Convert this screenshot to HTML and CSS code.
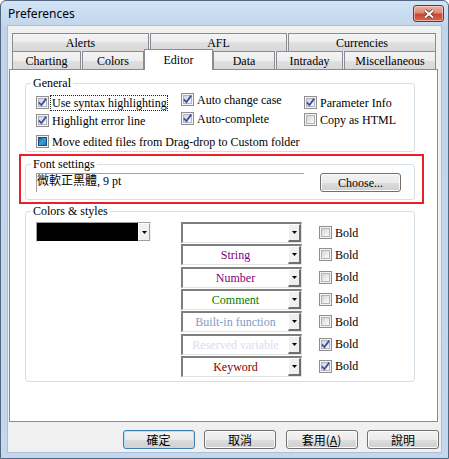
FILE: index.html
```html
<!DOCTYPE html>
<html>
<head>
<meta charset="utf-8">
<link rel="stylesheet" href="styles.css">
</head>
<body>
<div class="window">
  <div class="titlebar">
    <span class="title">Preferences</span>
    <div class="close">
      <svg width="12" height="10" viewBox="0 0 12 10"><path d="M2 1.5 L10 8.5 M10 1.5 L2 8.5" stroke="#5b2a22" stroke-width="3.6" fill="none"/><path d="M2 1.5 L10 8.5 M10 1.5 L2 8.5" stroke="#ffffff" stroke-width="2" fill="none"/></svg>
    </div>
  </div>
  <div class="client">
    <div class="tabs">
      <div class="tab-row top">
        <div class="tab t-alerts">Alerts</div>
        <div class="tab t-afl">AFL</div>
        <div class="tab t-cur">Currencies</div>
      </div>
      <div class="tab-row bottom">
        <div class="tab t-chart">Charting</div>
        <div class="tab t-colors">Colors</div>
        <div class="tab t-editor selected">Editor</div>
        <div class="tab t-data">Data</div>
        <div class="tab t-intra">Intraday</div>
        <div class="tab t-misc">Miscellaneous</div>
      </div>
    </div>
    <div class="panel">
      <fieldset class="group">
        <legend>General</legend>
        <div class="gen-body">
          <div class="gen-grid">
            <div class="gcol c1">
              <div class="chk"><span class="cb"><svg class="tick" width="9" height="9" viewBox="0 0 9 9"><path d="M0.8 4.3 L3.4 7 L8.2 0.6" stroke="#3f4fa6" stroke-width="1.8" fill="none"/></svg></span><span class="focus">Use syntax highlighting</span></div>
              <div class="chk"><span class="cb"><svg class="tick" width="9" height="9" viewBox="0 0 9 9"><path d="M0.8 4.3 L3.4 7 L8.2 0.6" stroke="#3f4fa6" stroke-width="1.8" fill="none"/></svg></span><span>Highlight error line</span></div>
            </div>
            <div class="gcol c2">
              <div class="chk"><span class="cb"><svg class="tick" width="9" height="9" viewBox="0 0 9 9"><path d="M0.8 4.3 L3.4 7 L8.2 0.6" stroke="#3f4fa6" stroke-width="1.8" fill="none"/></svg></span><span>Auto change case</span></div>
              <div class="chk"><span class="cb"><svg class="tick" width="9" height="9" viewBox="0 0 9 9"><path d="M0.8 4.3 L3.4 7 L8.2 0.6" stroke="#3f4fa6" stroke-width="1.8" fill="none"/></svg></span><span>Auto-complete</span></div>
            </div>
            <div class="gcol c3">
              <div class="chk"><span class="cb"><svg class="tick" width="9" height="9" viewBox="0 0 9 9"><path d="M0.8 4.3 L3.4 7 L8.2 0.6" stroke="#3f4fa6" stroke-width="1.8" fill="none"/></svg></span><span>Parameter Info</span></div>
              <div class="chk"><span class="cb"></span><span>Copy as HTML</span></div>
            </div>
          </div>
          <div class="chk row3"><span class="cb mixed"></span><span>Move edited files from Drag-drop to Custom folder</span></div>
        </div>
      </fieldset>

      <div class="highlight">
        <fieldset class="group">
          <legend>Font settings</legend>
          <div class="font-row">
            <div class="font-field">微軟正黑體, 9 pt</div>
            <div class="btn choose">Choose...</div>
          </div>
        </fieldset>
      </div>

      <fieldset class="group">
        <legend>Colors &amp; styles</legend>
        <div class="colors-body">
          <div class="combo black"><span class="combo-val"></span><span class="arrow"><svg width="5" height="3" viewBox="0 0 5 3"><polygon points="0,0 5,0 2.5,3" fill="#000"/></svg></span></div>
          <div class="style-list">
            <div class="style-row">
              <div class="combo"><span class="combo-val"></span><span class="arrow"><svg width="5" height="3" viewBox="0 0 5 3"><polygon points="0,0 5,0 2.5,3" fill="#000"/></svg></span></div>
              <div class="chk bold"><span class="cb"></span><span>Bold</span></div>
            </div>
            <div class="style-row">
              <div class="combo"><span class="combo-val c-string">String</span><span class="arrow"><svg width="5" height="3" viewBox="0 0 5 3"><polygon points="0,0 5,0 2.5,3" fill="#000"/></svg></span></div>
              <div class="chk bold"><span class="cb"></span><span>Bold</span></div>
            </div>
            <div class="style-row">
              <div class="combo"><span class="combo-val c-number">Number</span><span class="arrow"><svg width="5" height="3" viewBox="0 0 5 3"><polygon points="0,0 5,0 2.5,3" fill="#000"/></svg></span></div>
              <div class="chk bold"><span class="cb"></span><span>Bold</span></div>
            </div>
            <div class="style-row">
              <div class="combo"><span class="combo-val c-comment">Comment</span><span class="arrow"><svg width="5" height="3" viewBox="0 0 5 3"><polygon points="0,0 5,0 2.5,3" fill="#000"/></svg></span></div>
              <div class="chk bold"><span class="cb"></span><span>Bold</span></div>
            </div>
            <div class="style-row">
              <div class="combo"><span class="combo-val c-builtin">Built-in function</span><span class="arrow"><svg width="5" height="3" viewBox="0 0 5 3"><polygon points="0,0 5,0 2.5,3" fill="#000"/></svg></span></div>
              <div class="chk bold"><span class="cb"></span><span>Bold</span></div>
            </div>
            <div class="style-row">
              <div class="combo"><span class="combo-val c-reserved">Reserved variable</span><span class="arrow"><svg width="5" height="3" viewBox="0 0 5 3"><polygon points="0,0 5,0 2.5,3" fill="#000"/></svg></span></div>
              <div class="chk bold"><span class="cb"><svg class="tick" width="9" height="9" viewBox="0 0 9 9"><path d="M0.8 4.3 L3.4 7 L8.2 0.6" stroke="#3f4fa6" stroke-width="1.8" fill="none"/></svg></span><span>Bold</span></div>
            </div>
            <div class="style-row">
              <div class="combo"><span class="combo-val c-keyword">Keyword</span><span class="arrow"><svg width="5" height="3" viewBox="0 0 5 3"><polygon points="0,0 5,0 2.5,3" fill="#000"/></svg></span></div>
              <div class="chk bold"><span class="cb"><svg class="tick" width="9" height="9" viewBox="0 0 9 9"><path d="M0.8 4.3 L3.4 7 L8.2 0.6" stroke="#3f4fa6" stroke-width="1.8" fill="none"/></svg></span><span>Bold</span></div>
            </div>
          </div>
        </div>
      </fieldset>
    </div>
    <div class="buttons">
      <div class="btn cjk default">確定</div>
      <div class="btn cjk">取消</div>
      <div class="btn cjk">套用(<u>A</u>)</div>
      <div class="btn cjk">說明</div>
    </div>
  </div>
</div>
</body>
</html>
```

FILE: styles.css
```css
html, body {
  margin: 0;
  padding: 0;
  background: #ffffff;
}

.window {
  box-sizing: border-box;
  width: 449px;
  height: 459px;
  border: 1px solid #51667f;
  border-radius: 6px 6px 0 0;
  background: linear-gradient(#d3e3f5 0px, #c0d5ec 26px, #c4d7ed 100%);
  display: flex;
  flex-direction: column;
  font-family: "Liberation Serif", "Noto Sans CJK TC", serif;
  font-size: 12px;
  color: #000;
}

.titlebar {
  height: 25px;
  display: flex;
  justify-content: space-between;
  align-items: flex-start;
  padding: 4px 4px 0 7px;
  box-sizing: border-box;
  flex: none;
}

.title {
  font-family: "Noto Sans", "Open Sans", sans-serif;
  font-size: 12px;
  line-height: 18px;
  margin-top: 0;
  color: #000;
}

.close {
  box-sizing: border-box;
  width: 31px;
  height: 17px;
  border: 1px solid #7a3226;
  border-radius: 3px;
  background: linear-gradient(#eab1a5 0%, #dc8a78 45%, #c8472f 55%, #d66a4f 100%);
  box-shadow: inset 0 0 0 1px rgba(255, 220, 210, 0.6);
  display: flex;
  align-items: center;
  justify-content: center;
}

.client {
  flex: 1;
  margin: 0 7px 6px 7px;
  background: #f0f0f0;
  padding: 7px 2px 0 1px;
  display: flex;
  flex-direction: column;
  box-shadow: 0 0 0 1px #aabfd8;
}

/* Tabs */
.tabs {
  margin-left: 3px;
  display: flex;
  flex-direction: column;
}

.tab-row {
  display: flex;
  height: 18px;
}

.tab {
  box-sizing: border-box;
  height: 18px;
  border: 1px solid #898c95;
  border-bottom: none;
  background: linear-gradient(#f4f4f4 0%, #ededed 50%, #e0e0e0 50%, #d8d8d8 100%);
  display: flex;
  align-items: center;
  justify-content: center;
  line-height: 14px;
  padding-top: 1px;
}

.tab-row.top .tab {
  border-bottom: none;
}

.t-alerts { width: 137px; margin-right: 1px; }
.t-afl { width: 137px; margin-right: 1px; }
.t-cur { width: 148px; }
.t-chart { width: 69px; margin-right: 1px; }
.t-colors { width: 62px; }
.t-editor { width: 69px; }
.t-data { width: 62px; margin-right: 1px; }
.t-intra { width: 67px; margin-right: 1px; }
.t-misc { width: 92px; }

.tab.selected {
  background: #ffffff;
  height: 21px;
  margin-top: -2px;
  position: relative;
  z-index: 1;
  align-items: flex-start;
  padding-top: 3px;
}

/* Panel */
.panel {
  box-sizing: border-box;
  width: 429px;
  height: 353px;
  border: 1px solid #898c95;
  background: #ffffff;
  padding: 6px 22px 0 15px;
  flex: none;
}

.group {
  margin: 0;
  padding: 0;
  border: 1px solid #d5dfe5;
  border-radius: 3px;
  min-width: 0;
}

.group legend {
  margin-left: 5px;
  padding: 0 2px;
  line-height: 14px;
  font-size: 12px;
}

.gen-body {
  padding: 0 0 1px 10px;
}

.gen-grid {
  display: grid;
  grid-template-columns: 145px 123px 1fr;
}

.gcol {
  display: flex;
  flex-direction: column;
}

.gcol.c1 { padding-top: 4px; gap: 1px; }
.gcol.c2 { padding-top: 1px; gap: 2px; }
.gcol.c3 { padding-top: 4px; gap: 0; }

.chk {
  display: flex;
  align-items: center;
  height: 17px;
  gap: 3px;
  white-space: nowrap;
  line-height: 14px;
}

.chk.row3 {
  margin-top: 4px;
}

.focus {
  outline: 1px dotted #222;
  outline-offset: 0;
  margin-left: -1px;
  padding-left: 1px;
}

.cb {
  box-sizing: border-box;
  width: 13px;
  height: 13px;
  flex: none;
  border: 1px solid #8f8f8f;
  background: #f4f4f4;
  padding: 1px;
  display: grid;
}

.cb::before {
  content: "";
  grid-area: 1 / 1;
  border: 1px solid #b1b5ba;
  background: linear-gradient(135deg, #cfd2d7 0%, #e9ebee 55%, #fbfbfb 100%);
}

.cb .tick {
  grid-area: 1 / 1;
  overflow: visible;
}

.cb.mixed::before {
  border-color: #1d4f80;
  background: linear-gradient(135deg, #1f5f98 0%, #3aa0d6 50%, #2275b3 100%);
}

/* Font settings highlight */
.highlight {
  margin: 2px -9px 0 -6px;
  border: 2px solid #e8202a;
  padding: 1px 7px 2px 4px;
}

.font-row {
  display: flex;
  align-items: flex-start;
  gap: 16px;
  padding: 2px 13px 7px 10px;
}

.font-field {
  box-sizing: border-box;
  width: 268px;
  height: 19px;
  border-top: 1px solid #a0a0a0;
  border-left: 1px solid #a0a0a0;
  padding-left: 0;
  line-height: 15px;
  white-space: nowrap;
}

.btn {
  box-sizing: border-box;
  height: 19px;
  border: 1px solid #707070;
  border-radius: 3px;
  background: linear-gradient(#f2f2f2 0%, #ebebeb 50%, #dddddd 50%, #cfcfcf 100%);
  box-shadow: inset 0 0 0 1px #fbfbfb;
  display: flex;
  align-items: center;
  justify-content: center;
  line-height: 14px;
  white-space: nowrap;
}

.btn.choose {
  width: 81px;
}

/* Colors & styles */
.colors-body {
  display: flex;
  align-items: flex-start;
  padding: 4px 0 4px 10px;
}

.combo {
  box-sizing: border-box;
  display: flex;
  height: 21px;
  width: 121px;
  border-style: solid;
  border-width: 2px 1px 1px 2px;
  border-color: #7e7e7e #e3e3e3 #e3e3e3 #7e7e7e;
  background: #ffffff;
  flex: none;
}

.combo.black {
  width: 115px;
  height: 20px;
  margin-right: 30px;
  border-width: 1px;
  border-color: #a0a0a0 #f0f0f0 #ffffff #a0a0a0;
}

.combo.black .combo-val {
  background: #000000;
}

.combo-val {
  flex: 1;
  display: flex;
  align-items: center;
  justify-content: center;
  white-space: nowrap;
  line-height: 14px;
  overflow: hidden;
}

.arrow {
  box-sizing: border-box;
  width: 13px;
  flex: none;
  background: #f0f0f0;
  border-style: solid;
  border-width: 1px 2px 2px 1px;
  border-color: #ffffff #6f6f6f #6f6f6f #ffffff;
  display: flex;
  align-items: center;
  justify-content: center;
}

.combo.black .arrow {
  width: 12px;
  border-width: 1px;
  border-color: #ffffff #a0a0a0 #a0a0a0 #ffffff;
}

.arrow svg {
  display: block;
}

.style-list {
  display: flex;
  flex-direction: column;
  gap: 1.33px;
}

.style-row {
  display: flex;
  align-items: center;
}

.chk.bold {
  margin-left: 17px;
}

.c-string { color: #800080; }
.c-number { color: #800080; }
.c-comment { color: #008000; }
.c-builtin { color: #7f9cc8; }
.c-reserved { color: #dcdcf0; }
.c-keyword { color: #800000; }

/* Bottom buttons */
.buttons {
  display: flex;
  justify-content: flex-end;
  gap: 9.5px;
  margin-top: 8px;
}

.btn.cjk {
  width: 72px;
  font-family: "Noto Sans CJK TC", "Liberation Sans", sans-serif;
  font-size: 12px;
}

.btn.default {
  border-color: #3c7fb1;
  box-shadow: inset 0 0 0 1px #aee3fa;
}
```
